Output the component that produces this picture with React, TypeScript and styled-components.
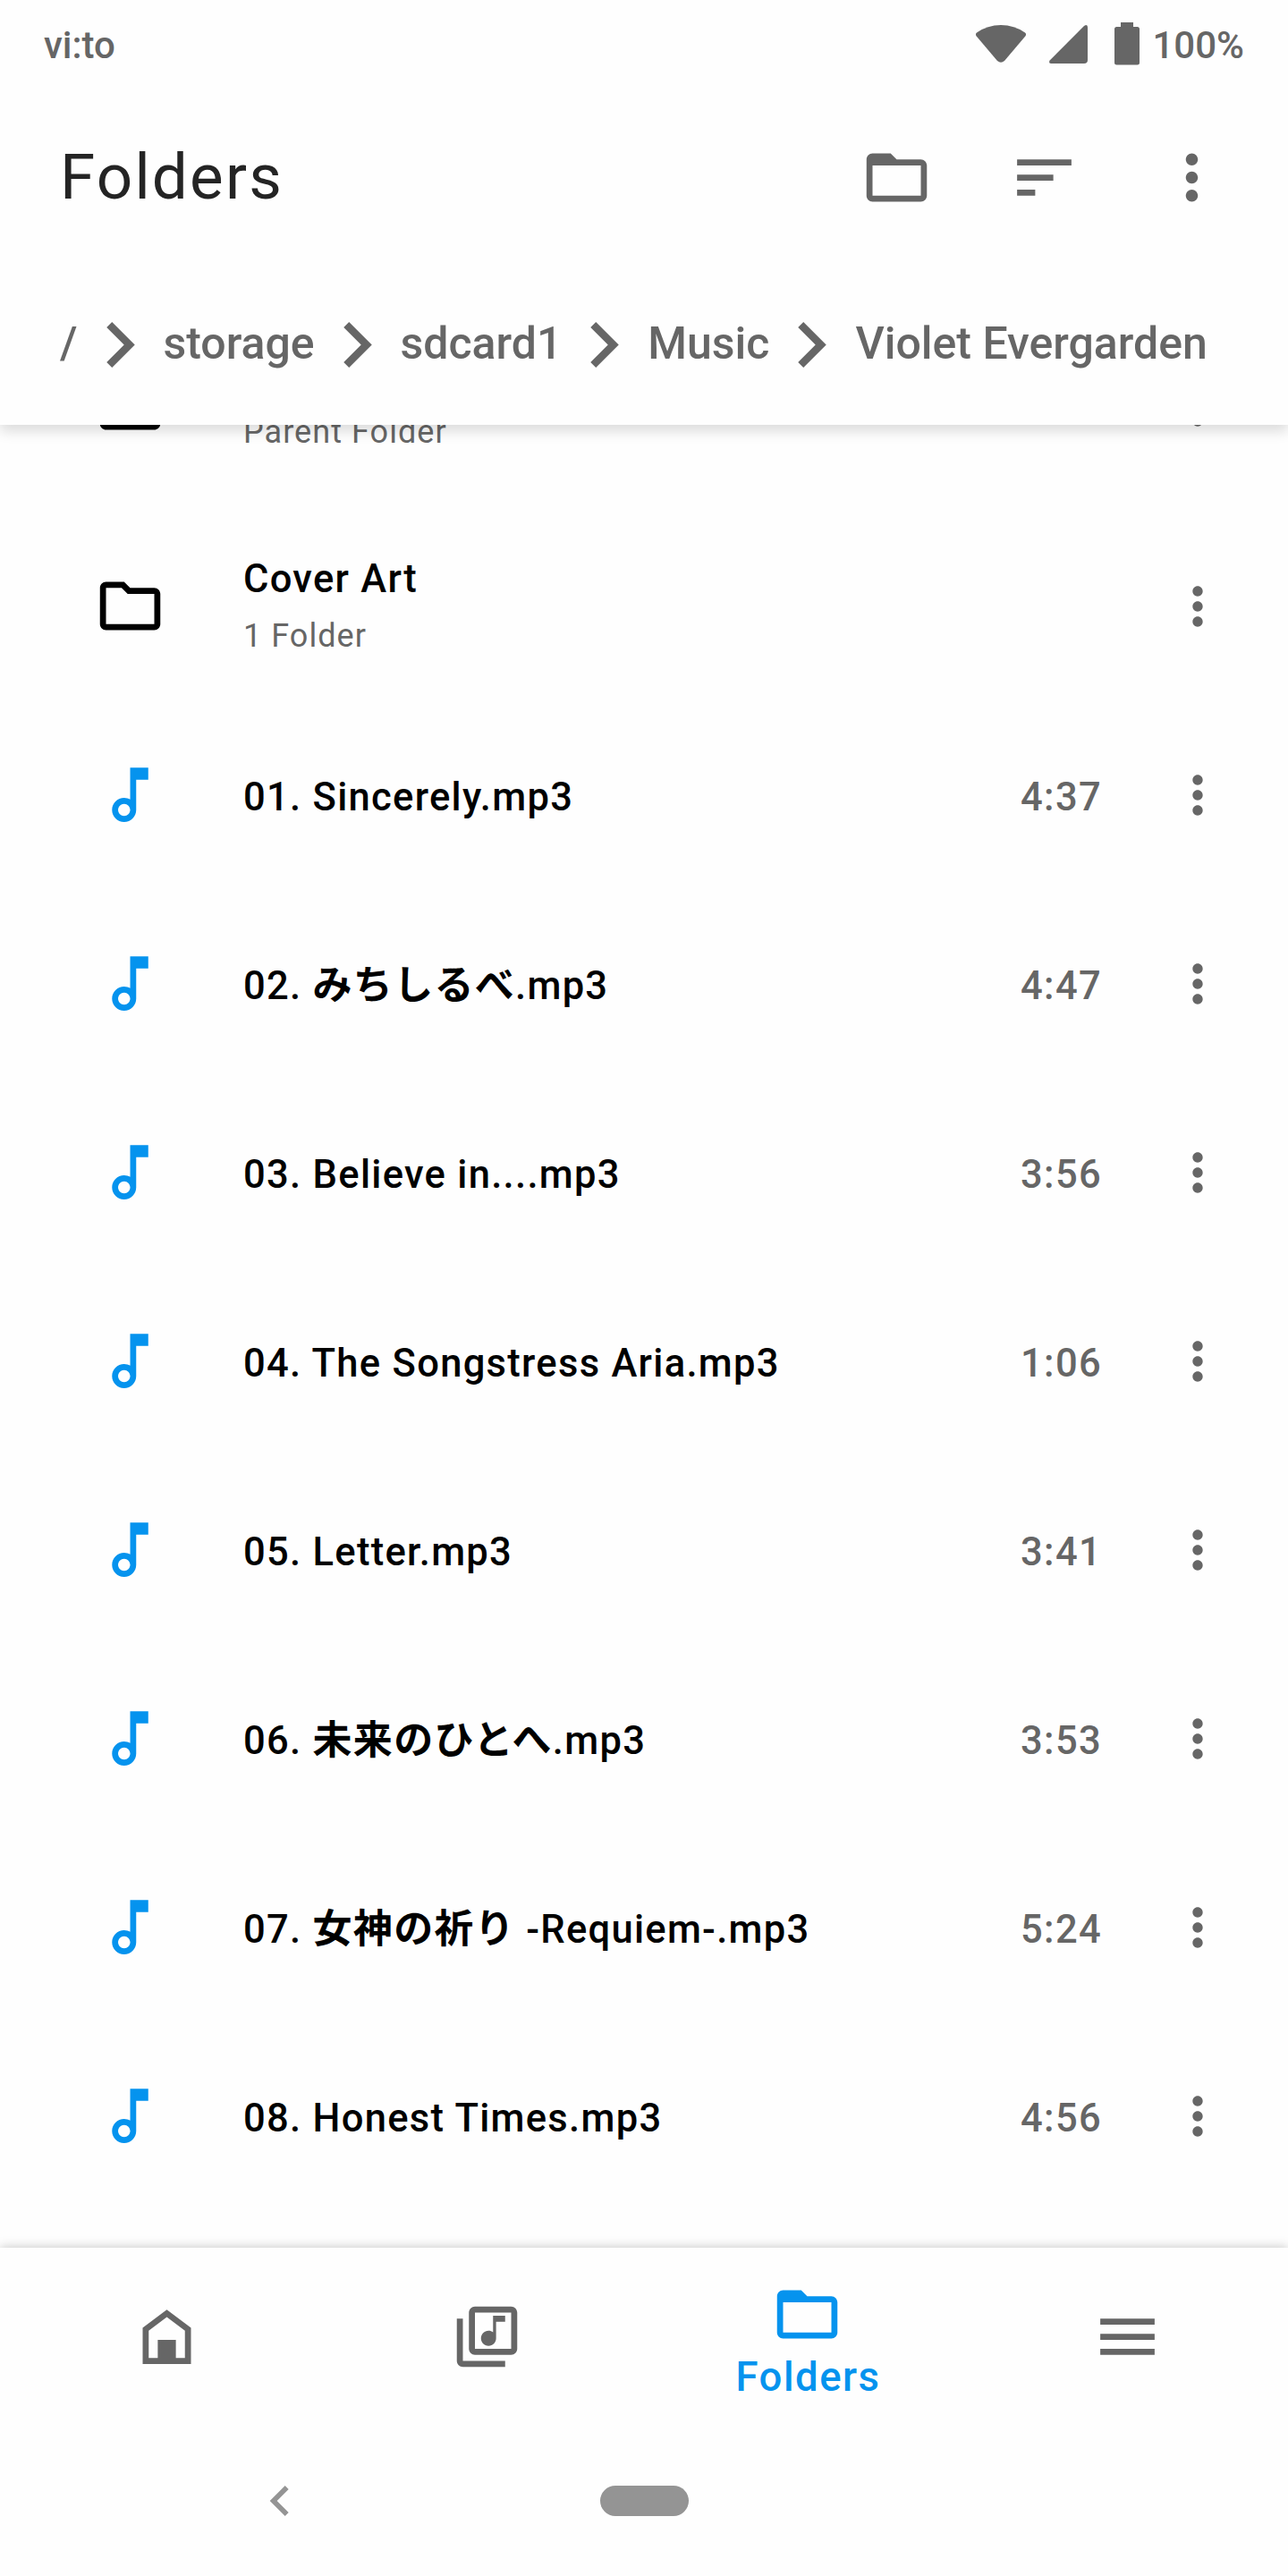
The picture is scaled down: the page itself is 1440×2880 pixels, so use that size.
import React from 'react';
import styled, { createGlobalStyle } from 'styled-components';

const GREY = '#666666';
const BLUE = '#0593ee';

const GlobalStyle = createGlobalStyle`
  * { box-sizing: border-box; }
  body {
    margin: 0;
    background: #fefefe;
    font-family: Roboto, 'Noto Sans CJK JP', sans-serif;
  }
`;

const Screen = styled.div`
  display: flex;
  flex-direction: column;
  width: 1440px;
  height: 2880px;
  overflow: hidden;
  background: #fefefe;
`;

const Header = styled.header`
  flex: none;
  z-index: 1;
  display: flex;
  flex-direction: column;
  height: 475px;
  background: #fefefe;
  box-shadow: 0 7px 14px rgba(0, 0, 0, 0.14);
`;

const StatusBar = styled.div`
  display: flex;
  align-items: center;
  justify-content: space-between;
  height: 98px;
  padding: 0 49px 0 49px;
  color: ${GREY};
`;

const StatusText = styled.span`
  padding-top: 4px;
  font-size: 42px;
  font-weight: 500;
  line-height: 60px;
`;

const StatusIcons = styled.div`
  display: flex;
  align-items: center;
`;

const StatusGlyph = styled.svg<{ $gap: number }>`
  display: block;
  margin-right: ${(p) => p.$gap}px;
`;

const Toolbar = styled.div`
  display: flex;
  align-items: center;
  height: 200px;
  padding: 0 67px;
`;

const Title = styled.h1`
  flex: 1;
  margin: 0;
  padding-bottom: 2px;
  color: #242424;
  font-size: 71px;
  font-weight: 400;
  letter-spacing: 2.2px;
`;

const Actions = styled.div`
  display: flex;
  gap: 84px;
`;

const Glyph = styled.svg<{ $size: number }>`
  display: block;
  flex: none;
  width: ${(p) => p.$size}px;
  height: ${(p) => p.$size}px;
  fill: currentColor;
`;

const IconButton = styled.button`
  display: flex;
  padding: 0;
  border: 0;
  background: none;
  color: ${GREY};
`;

const Breadcrumbs = styled.nav`
  display: flex;
  align-items: center;
  height: 177px;
  padding: 0 0 2px 67px;
  color: ${GREY};
`;

const Crumb = styled.span`
  padding-bottom: 3px;
  font-size: 50px;
  font-weight: 500;
  line-height: 60px;
  white-space: nowrap;
`;

const Separator = styled(Glyph)`
  width: 32px;
  height: 51px;
  margin: 0 32px 0 32px;
`;

const List = styled.main`
  flex: 1;
  min-height: 0;
  overflow: hidden;
`;

const Row = styled.div<{ $scrolled?: boolean }>`
  display: flex;
  align-items: center;
  height: 211px;
  margin-top: ${(p) => (p.$scrolled ? '-127px' : '0')};
  margin-bottom: ${(p) => (p.$scrolled ? '13px' : '0')};
  padding: 0 67px 0 105px;
`;

const Leading = styled.div<{ $accent?: boolean }>`
  display: flex;
  width: 167px;
  color: ${(p) => (p.$accent ? BLUE : '#000')};
`;

const Labels = styled.div<{ $bottom?: boolean; $single?: boolean }>`
  display: flex;
  flex: 1;
  flex-direction: column;
  gap: 1px;
  justify-content: ${(p) => (p.$bottom ? 'flex-end' : 'center')};
  height: ${(p) => (p.$bottom ? '121px' : 'auto')};
  padding-top: ${(p) => (p.$single ? 6 : 4)}px;
`;

const Name = styled.div`
  color: #000;
  font-size: 43.5px;
  font-weight: 500;
  line-height: 62px;
  letter-spacing: 1.3px;
  white-space: nowrap;
`;

const Japanese = styled.span`
  font-size: 44px;
  font-weight: 700;
`;

const Detail = styled.div`
  color: ${GREY};
  font-size: 36px;
  line-height: 62px;
  letter-spacing: 1.05px;
`;

const Duration = styled.div`
  width: 128px;
  padding-top: 6px;
  margin-right: 36px;
  color: ${GREY};
  font-size: 43.5px;
  font-weight: 500;
  line-height: 62px;
  letter-spacing: 1.35px;
`;

const BottomNav = styled.nav`
  flex: none;
  z-index: 1;
  display: grid;
  grid-template-columns: repeat(4, 358px);
  height: 199px;
  padding-left: 7px;
  background: #fefefe;
  box-shadow: 0 0 12px rgba(0, 0, 0, 0.24);
`;

const NavItem = styled.button<{ $active?: boolean }>`
  display: flex;
  flex-direction: column;
  align-items: center;
  justify-content: center;
  padding: ${(p) => (p.$active ? '7px 0 0 1px' : '0')};
  border: 0;
  background: none;
  color: ${(p) => (p.$active ? BLUE : GREY)};
  font-family: inherit;
`;

const NavLabel = styled.span`
  margin-top: 2px;
  padding-left: 2px;
  font-size: 45.5px;
  font-weight: 500;
  line-height: 56px;
  letter-spacing: 1.5px;
`;

const SystemBar = styled.div`
  flex: none;
  z-index: 2;
  display: grid;
  grid-template-columns: 1fr 99px 1fr;
  align-items: center;
  height: 168px;
  background: #fefefe;
  color: #949494;
`;

const BackButton = styled(IconButton)`
  padding-left: 279px;
  color: #949494;
`;

const HomePill = styled.div`
  height: 34px;
  border-radius: 17px;
  background: #949494;
`;

const paths = {
  folderTab:
    'M20 6h-8l-2-2H4c-1.1 0-1.99.9-1.99 2L2 18c0 1.1.9 2 2 2h16c1.1 0 2-.9 2-2V8c0-1.1-.9-2-2-2zm0 12H4V8h16v10z',
  folder:
    'M9.17 6l2 2H20v10H4V6h5.17M10 4H4c-1.1 0-1.99.9-1.99 2L2 18c0 1.1.9 2 2 2h16c1.1 0 2-.9 2-2V8c0-1.1-.9-2-2-2h-8l-2-2z',
  sort: 'M3 18h6v-2H3v2zM3 6v2h18V6H3zm0 7h12v-2H3v2z',
  more: 'M12 8c1.1 0 2-.9 2-2s-.9-2-2-2-2 .9-2 2 .9 2 2 2zm0 2c-1.1 0-2 .9-2 2s.9 2 2 2 2-.9 2-2-.9-2-2-2zm0 6c-1.1 0-2 .9-2 2s.9 2 2 2 2-.9 2-2-.9-2-2-2z',
  note: 'M12 3l.01 10.55c-.59-.34-1.27-.55-2-.55C7.79 13 6 14.79 6 17s1.79 4 4.01 4S14 19.21 14 17V7h4V3h-6zm-1.99 16c-1.1 0-2-.9-2-2s.9-2 2-2 2 .9 2 2-.9 2-2 2z',
  home: 'M12 3L4 9v12h16V9l-8-6zm6 16h-3v-6H9v6H6v-9l6-4.5 6 4.5v9z',
  library:
    'M20 2H8c-1.1 0-2 .9-2 2v12c0 1.1.9 2 2 2h12c1.1 0 2-.9 2-2V4c0-1.1-.9-2-2-2zm0 14H8V4h12v12zm-7.5-1c1.38 0 2.5-1.12 2.5-2.5V7h3V5h-4v5.51c-.42-.32-.93-.51-1.5-.51-1.38 0-2.5 1.12-2.5 2.5s1.12 2.5 2.5 2.5zM4 6H2v14c0 1.1.9 2 2 2h14v-2H4V6z',
  menu: 'M3 18h18v-2H3v2zm0-5h18v-2H3v2zm0-7v2h18V6H3z',
  back: 'M15.41 7.41L14 6l-6 6 6 6 1.41-1.41L10.83 12z',
};

const Icon = ({ name, size = 81 }: { name: keyof typeof paths; size?: number }) => (
  <Glyph viewBox="0 0 24 24" $size={size}>
    <path d={paths[name]} />
  </Glyph>
);

const MoreButton = () => (
  <IconButton>
    <Icon name="more" size={68} />
  </IconButton>
);

const crumbs = ['/', 'storage', 'sdcard1', 'Music', 'Violet Evergarden'];

const songs: { before: string; japanese?: string; after?: string; time: string }[] = [
  { before: '01. Sincerely.mp3', time: '4:37' },
  { before: '02. ', japanese: 'みちしるべ', after: '.mp3', time: '4:47' },
  { before: '03. Believe in....mp3', time: '3:56' },
  { before: '04. The Songstress Aria.mp3', time: '1:06' },
  { before: '05. Letter.mp3', time: '3:41' },
  { before: '06. ', japanese: '未来のひとへ', after: '.mp3', time: '3:53' },
  { before: '07. ', japanese: '女神の祈り', after: ' -Requiem-.mp3', time: '5:24' },
  { before: '08. Honest Times.mp3', time: '4:56' },
];

export default function App() {
  return (
    <Screen>
      <GlobalStyle />
      <Header>
        <StatusBar>
          <StatusText>vi:to</StatusText>
          <StatusIcons>
            <StatusGlyph width="56" height="42" viewBox="0 0 56 42" fill={GREY} $gap={26}>
              <path d="M1 8.500Q13 0 28 0T55 8.500Q57 10 55.300 12.500L32 40Q28 43.500 24 40L.700 12.500Q-1 10 1 8.500Z" />
            </StatusGlyph>
            <StatusGlyph width="43" height="43" viewBox="0 0 43 43" fill={GREY} $gap={30}>
              <path d="M39 .900Q43-1.500 43 2.500V39Q43 43 39 43H2.500Q-1.200 43 .700 39.500Z" />
            </StatusGlyph>
            <StatusGlyph width="28" height="48" viewBox="0 0 28 48" fill={GREY} $gap={14}>
              <path d="M7 0H21V5H25.500Q28 5 28 7.500V45Q28 47.500 25.500 47.500H2.500Q0 47.500 0 45V7.500Q0 5 2.500 5H7Z" />
            </StatusGlyph>
            <StatusText>100%</StatusText>
          </StatusIcons>
        </StatusBar>
        <Toolbar>
          <Title>Folders</Title>
          <Actions>
            <IconButton>
              <Icon name="folderTab" />
            </IconButton>
            <IconButton>
              <Icon name="sort" />
            </IconButton>
            <IconButton>
              <Icon name="more" />
            </IconButton>
          </Actions>
        </Toolbar>
        <Breadcrumbs>
          {crumbs.map((c, i) => (
            <React.Fragment key={c}>
              {i > 0 && (
                <Separator viewBox="8.59 6 7.41 12" $size={51}>
                  <path d="M10 6L8.590 7.410 13.170 12l-4.580 4.590L10 18l6-6z" />
                </Separator>
              )}
              <Crumb>{c}</Crumb>
            </React.Fragment>
          ))}
        </Breadcrumbs>
      </Header>

      <List>
        <Row $scrolled>
          <Leading>
            <Icon name="folder" />
          </Leading>
          <Labels $bottom>
            <Detail>Parent Folder</Detail>
          </Labels>
          <MoreButton />
        </Row>
        <Row>
          <Leading>
            <Icon name="folder" />
          </Leading>
          <Labels>
            <Name>Cover Art</Name>
            <Detail>1 Folder</Detail>
          </Labels>
          <MoreButton />
        </Row>
        {songs.map((s) => (
          <Row key={s.before + s.time}>
            <Leading $accent>
              <Icon name="note" />
            </Leading>
            <Labels $single>
              <Name>
                {s.before}
                {s.japanese && <Japanese lang="ja">{s.japanese}</Japanese>}
                {s.after}
              </Name>
            </Labels>
            <Duration>{s.time}</Duration>
            <MoreButton />
          </Row>
        ))}
      </List>

      <BottomNav>
        <NavItem>
          <Icon name="home" />
        </NavItem>
        <NavItem>
          <Icon name="library" />
        </NavItem>
        <NavItem $active>
          <Icon name="folderTab" />
          <NavLabel>Folders</NavLabel>
        </NavItem>
        <NavItem>
          <Icon name="menu" />
        </NavItem>
      </BottomNav>
      <SystemBar>
        <BackButton>
          <Icon name="back" size={68} />
        </BackButton>
        <HomePill />
      </SystemBar>
    </Screen>
  );
}
